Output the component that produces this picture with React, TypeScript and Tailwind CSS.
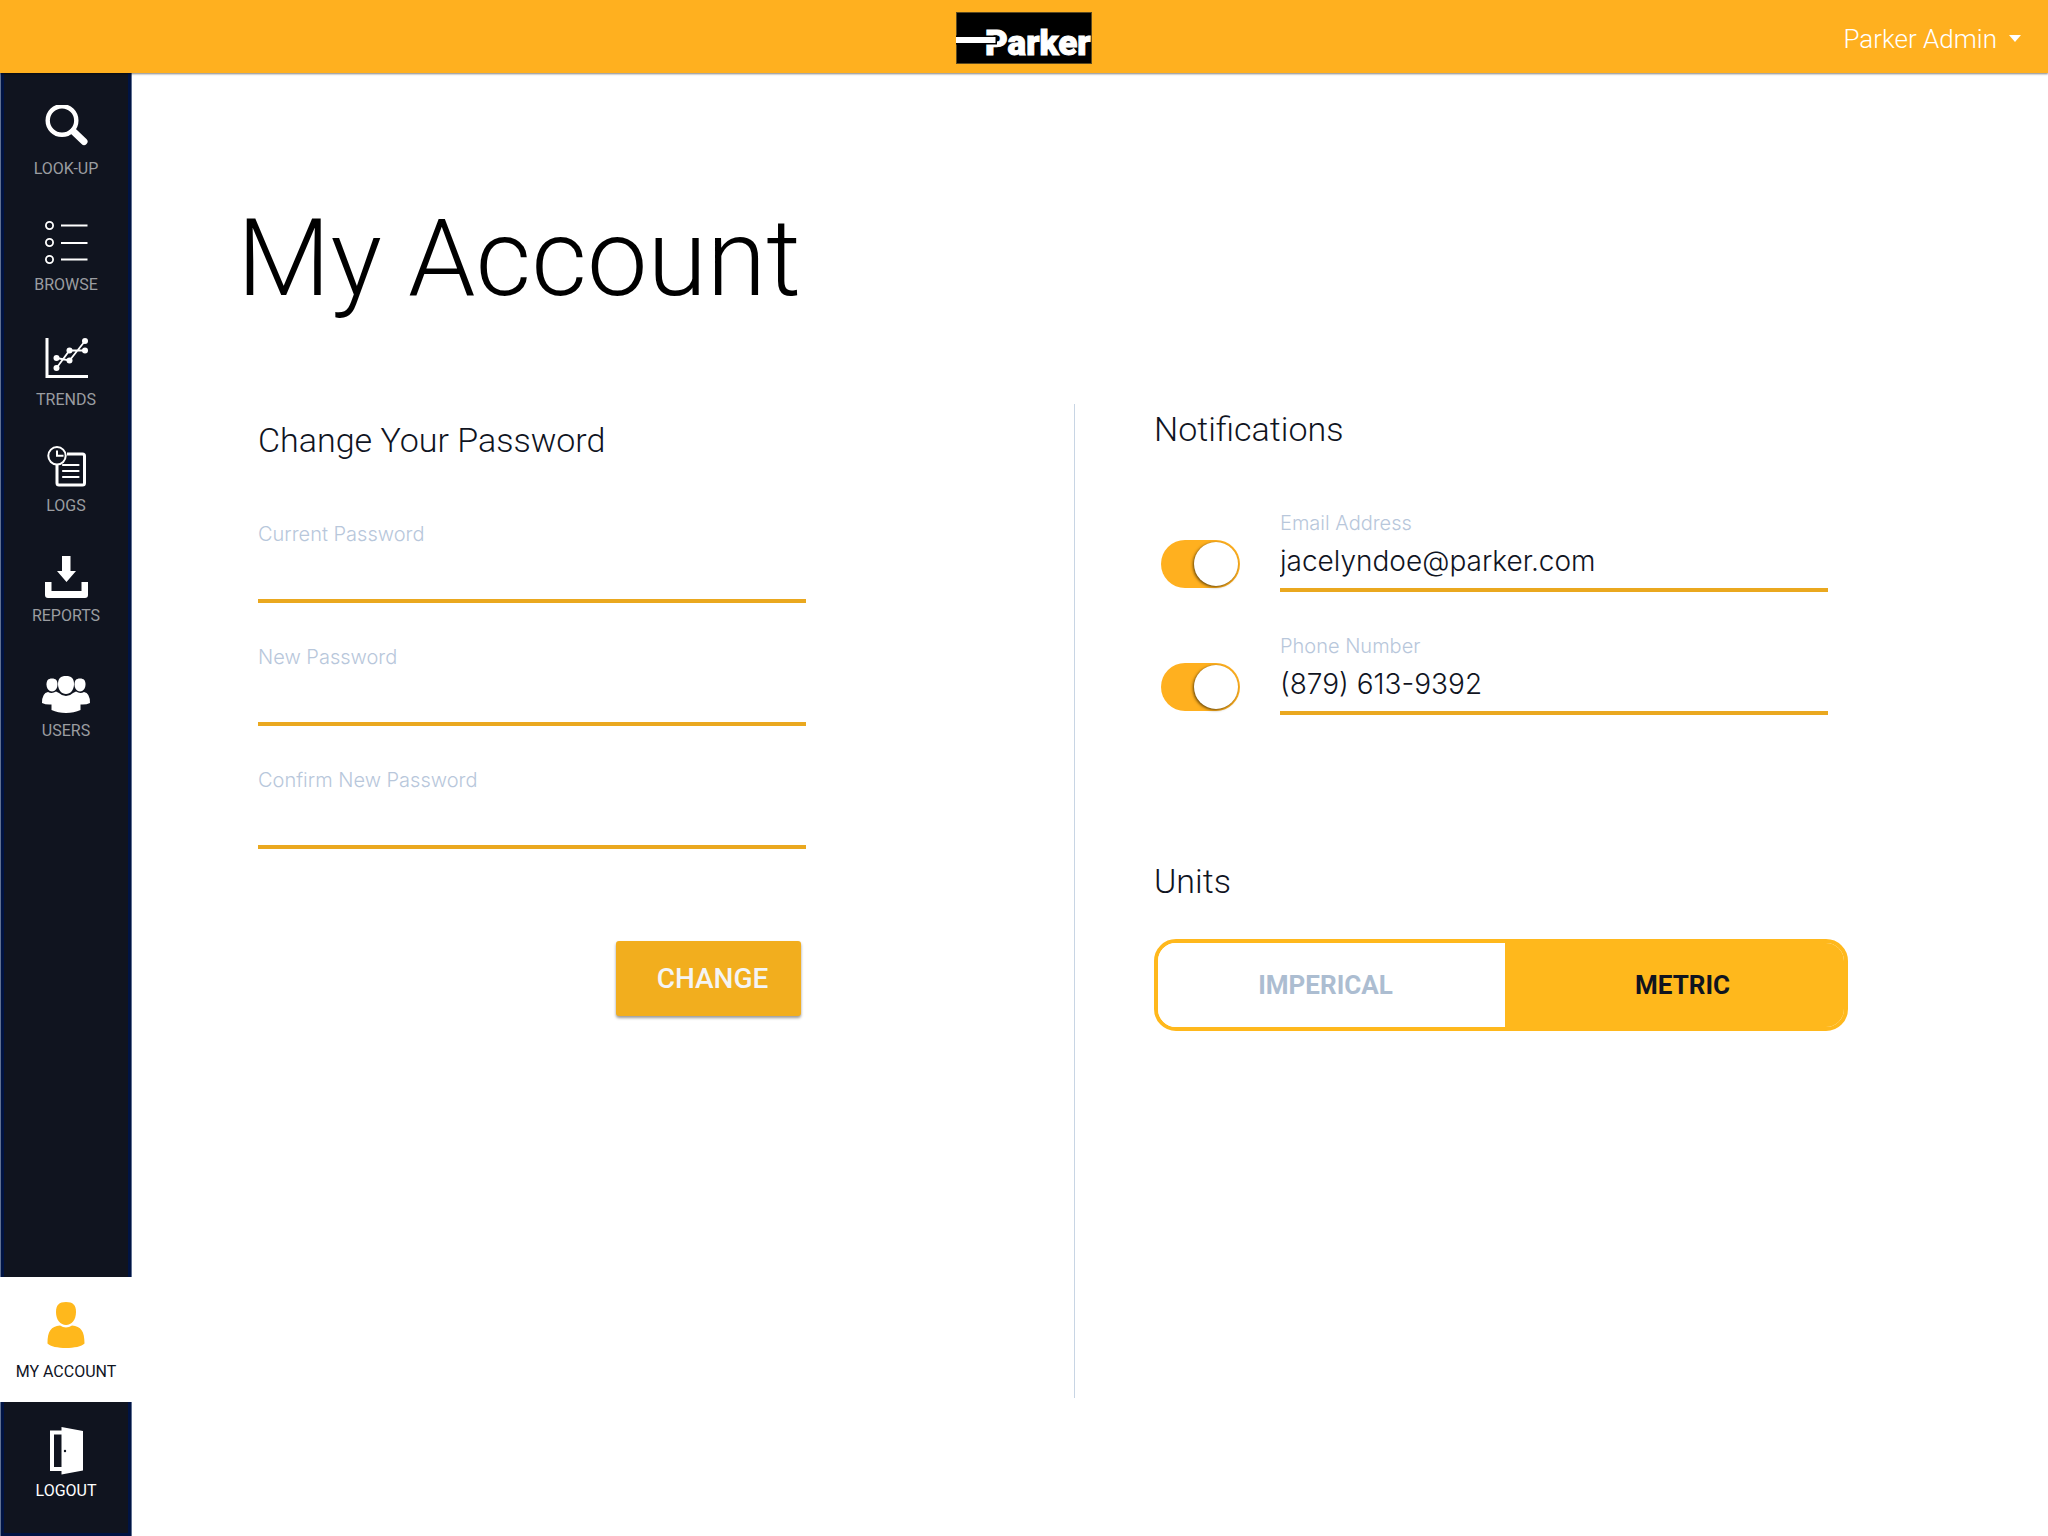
import React, { useState } from "react";

type IconProps = { className?: string };

const SearchIcon = ({ className }: IconProps) => (
  <svg className={className} width="44" height="42" viewBox="0 0 44 42" fill="none" stroke="#fff" aria-hidden="true">
    <circle cx="18" cy="15.500" r="14.300" strokeWidth="4.400" />
    <path d="M29.500 26.500L40 36.500" strokeWidth="7" strokeLinecap="round" />
  </svg>
);

const ListIcon = ({ className }: IconProps) => (
  <svg className={className} width="44" height="44" viewBox="0 0 44 44" fill="none" stroke="#fff" strokeWidth="1.800" aria-hidden="true">
    <circle cx="5.500" cy="4.500" r="3.600" />
    <circle cx="5.500" cy="21.500" r="3.600" />
    <circle cx="5.500" cy="38.500" r="3.600" />
    <path d="M17 4.500H43.500M17 22H43.500M17 38.500H43.500" strokeWidth="2" />
  </svg>
);

const TrendsIcon = ({ className }: IconProps) => (
  <svg className={className} width="44" height="42" viewBox="0 0 44 42" fill="none" stroke="#fff" aria-hidden="true">
    <path d="M3 0V38.500H44" strokeWidth="3" />
    <path d="M12.500 30L25.500 12.500H41M12.500 20L25.500 22.500L41 3" strokeWidth="1.800" />
    <g fill="#fff" stroke="none">
      <circle cx="12.500" cy="30" r="3" />
      <circle cx="12.500" cy="20" r="3" />
      <circle cx="25.500" cy="12.500" r="3" />
      <circle cx="25.500" cy="22.500" r="3" />
      <circle cx="41" cy="12.500" r="3" />
      <circle cx="41" cy="3" r="3" />
    </g>
  </svg>
);

const LogsIcon = ({ className }: IconProps) => (
  <svg className={className} width="40" height="42" viewBox="0 0 40 42" fill="none" stroke="#fff" aria-hidden="true">
    <path d="M21 8H36.500Q38.500 8 38.500 10V37Q38.500 39 36.500 39H13Q11 39 11 37V18.500" strokeWidth="3" />
    <circle cx="11" cy="9.800" r="8.700" strokeWidth="2" />
    <path d="M11 4.500V9.800H17.500" strokeWidth="2" />
    <path d="M17 19H32.500M17 25H32.500M17 31H32.500" strokeWidth="2.200" strokeLinecap="round" />
  </svg>
);

const ReportsIcon = ({ className }: IconProps) => (
  <svg className={className} width="43" height="42" viewBox="0 0 43 42" fill="#fff" aria-hidden="true">
    <path d="M17 0H25.500V15H31L21.500 26L12 15H17Z" />
    <path d="M0 26H6.500V35H36.500V26H43V39Q43 42 40 42H3Q0 42 0 39Z" />
  </svg>
);

const UsersIcon = ({ className }: IconProps) => (
  <svg className={className} width="48" height="37" viewBox="0 0 48 37" fill="#fff" aria-hidden="true">
    <path d="M10 2.500C14 2.500 15.500 4.500 15.500 8.500C15.500 12.500 13 15.500 10 15.500C7 15.500 4.500 12.500 4.500 8.500C4.500 4.500 6 2.500 10 2.500Z" />
    <path d="M38 2.500C42 2.500 43.500 4.500 43.500 8.500C43.500 12.500 41 15.500 38 15.500C35 15.500 32.500 12.500 32.500 8.500C32.500 4.500 34 2.500 38 2.500Z" />
    <path d="M24 0C29.500 0 32 2.500 32 8C32 14 28.500 18 24 18C19.500 18 16 14 16 8C16 2.500 18.500 0 24 0Z" />
    <path d="M6 16Q10 18 14 15.500L17 17Q20 20 24 20Q28 20 31 17L34 15.500Q38 18 42 16Q48 17 48 27Q44 29 38.500 28.500V34Q32 37 24 37Q16 37 9.500 34V28.500Q4 29 0 27Q0 17 6 16Z" />
  </svg>
);

const PersonIcon = ({ className }: IconProps) => (
  <svg className={className} width="38" height="46" viewBox="0 0 38 46" fill="#ffb81c" aria-hidden="true">
    <path d="M19 0C26 0 29 3 29 10C29 18 24.500 23 19 23C13.500 23 9 18 9 10C9 3 12 0 19 0Z" />
    <path d="M13 23.500Q19 27.500 25 23.500C34 24.500 37.500 29 37.500 41.500C32 47.500 6 47.500 .5 41.500C.5 29 4 24.500 13 23.500Z" />
  </svg>
);

const DoorIcon = ({ className }: IconProps) => (
  <svg className={className} width="34" height="48" viewBox="0 0 34 48" aria-hidden="true">
    <path fill="#fff" fillRule="evenodd" d="M1 3.500H13V44H1ZM5 7.500V40H13V7.500Z" />
    <path fill="#fff" d="M12.500 0L34 4V43.500L12.500 47.500Z" />
    <circle cx="16" cy="24" r="1.200" fill="#10141f" />
  </svg>
);

const ParkerLogo = () => (
  <svg width="136" height="52" viewBox="0 0 136 52" role="img" aria-label="Parker">
    <rect x=".5" y=".5" width="135" height="51" fill="#000" stroke="#5c4a20" />
    <text x="29" y="43" fill="#fff" stroke="#fff" strokeWidth="1" fontFamily="Roboto, sans-serif" fontWeight="900" fontSize="35">
      Parker
    </text>
    <path d="M0 23.500H41V32.500H0Z" fill="#000" />
    <path d="M0 25H39.500V31H0Z" fill="#fff" />
  </svg>
);

const navItems = [
  { label: "LOOK-UP", Icon: SearchIcon, box: "h-[106px] gap-3" },
  { label: "BROWSE", Icon: ListIcon, box: "h-[116px] gap-2.5" },
  { label: "TRENDS", Icon: TrendsIcon, box: "h-[115px] gap-2.5" },
  { label: "LOGS", Icon: LogsIcon, box: "h-[106px] gap-2" },
  { label: "REPORTS", Icon: ReportsIcon, box: "h-[110px] gap-2" },
  { label: "USERS", Icon: UsersIcon, box: "h-[115px] gap-2" },
];

const inputClass =
  "block w-full border-b-4 border-[#eaa81f] bg-transparent pb-0.5 font-['Inter',sans-serif] text-[28px] leading-8 font-light text-[#10141f] outline-none";

function Field(props: { id: string; label: string; type: string; value?: string }) {
  const [value, setValue] = useState(props.value ?? "");
  return (
    <div className="flex h-[81px] w-full max-w-[548px] flex-col">
      <label htmlFor={props.id} className="font-['Inter',sans-serif] text-[20px] leading-6 font-light text-[#b8c7db]">
        {props.label}
      </label>
      <input
        id={props.id}
        type={props.type}
        value={value}
        onChange={(e) => setValue(e.target.value)}
        className={`${inputClass} flex-1`}
      />
    </div>
  );
}

function Toggle({ label }: { label: string }) {
  return (
    <label className="relative mb-1 block h-12 w-[79px] shrink-0 cursor-pointer">
      <input type="checkbox" role="switch" defaultChecked aria-label={label} className="peer absolute inset-0 opacity-0" />
      <span className="absolute inset-0 rounded-full bg-gray-300 peer-checked:bg-[#ffb01f]" />
      <span className="absolute top-0.5 left-0.5 size-11 rounded-full bg-white shadow-[-1px_1px_3px_rgba(60,40,0,0.8)] peer-checked:left-[33px]" />
    </label>
  );
}

export default function App() {
  const [unit, setUnit] = useState("METRIC");
  const seg = (name: string) =>
    unit === name ? "bg-[#ffb81c] text-[#10141f]" : "bg-white text-[#acbdd1]";
  return (
    <div className="flex min-h-screen flex-col bg-white font-['Roboto',sans-serif] text-[#10141f]">
      <header className="relative z-10 grid h-[73px] grid-cols-[1fr_auto_1fr] items-center bg-[#ffb01f] shadow-[0_1px_2px_rgba(0,0,0,0.5)]">
        <span />
        <a href="#home" className="block pt-0.5">
          <ParkerLogo />
        </a>
        <button type="button" className="flex items-center gap-3 justify-self-end pt-1 pr-[27px] text-[26px] leading-8 font-light text-white">
          Parker Admin
          <svg width="12" height="7" viewBox="0 0 12 7" fill="#fff" aria-hidden="true">
            <path d="M0 0H12L6 7Z" />
          </svg>
        </button>
      </header>

      <div className="flex flex-1">
        <nav aria-label="Main" className="flex w-[132px] shrink-0 flex-col text-[16px] leading-5 font-normal">
          <div className="flex flex-1 flex-col border-x border-[#5f6f90] bg-[#10141f] text-[#9b9da1] shadow-[inset_3px_0_#001343,inset_-3px_0_#001343]">
            {navItems.map(({ label, Icon, box }) => (
              <a key={label} href={`#${label.toLowerCase()}`} className={`flex flex-col items-center justify-end ${box}`}>
                <Icon />
                {label}
              </a>
            ))}
          </div>
          <a href="#account" aria-current="page" className="flex h-[125px] flex-col items-center gap-3.5 bg-white pt-[25px]">
            <PersonIcon />
            MY ACCOUNT
          </a>
          <a
            href="#logout"
            className="flex h-[134px] flex-col items-center gap-1.5 border-x border-[#5f6f90] bg-[#10141f] pt-[25px] text-white shadow-[inset_3px_0_#001343,inset_-3px_-3px_#001343]"
          >
            <DoorIcon />
            LOGOUT
          </a>
        </nav>

        <main className="flex flex-1 flex-col pb-[138px]">
          <h1 className="mt-[125px] ml-[105px] text-[108px] leading-[120px] font-light text-black">My Account</h1>
          <div className="mt-[86px] grid flex-1 grid-cols-[942fr_974fr]">
            <form className="flex flex-col pr-8 pl-[126px]" onSubmit={(e) => e.preventDefault()}>
              <h2 className="mt-4 text-[34px] leading-10 font-light">Change Your Password</h2>
              <div className="mt-[62px] flex flex-col gap-[42px]">
                <Field id="current" label="Current Password" type="password" />
                <Field id="new" label="New Password" type="password" />
                <Field id="confirm" label="Confirm New Password" type="password" />
              </div>
              <div className="mt-[92px] flex max-w-[543px] justify-end">
                <button
                  type="submit"
                  className="h-[75px] w-[185px] rounded-[3px] bg-[#f2ae1e] pl-2 text-[28px] font-medium text-[#f4f4f4] shadow-[0_2px_3px_rgba(0,0,0,0.4)]"
                >
                  CHANGE
                </button>
              </div>
            </form>

            <div className="border-l border-[#c8d5e4] pr-8 pl-[79px]">
              <section aria-labelledby="notifications">
                <h2 id="notifications" className="mt-[5px] text-[34px] leading-10 font-light">
                  Notifications
                </h2>
                <div className="mt-[62px] flex flex-col gap-[42px] pl-[7px]">
                  <div className="flex items-end gap-10">
                    <Toggle label="Email notifications" />
                    <Field id="email" label="Email Address" type="email" value="jacelyndoe@parker.com" />
                  </div>
                  <div className="flex items-end gap-10">
                    <Toggle label="Phone notifications" />
                    <Field id="phone" label="Phone Number" type="tel" value="(879) 613-9392" />
                  </div>
                </div>
              </section>
              <section aria-labelledby="units">
                <h2 id="units" className="mt-[146px] text-[34px] leading-10 font-light">
                  Units
                </h2>
                <div className="mt-[38px] grid h-[92px] max-w-[694px] grid-cols-[347fr_339fr] overflow-hidden rounded-[22px] border-4 border-[#ffb81c] text-[26px] font-bold">
                  <button type="button" aria-pressed={unit === "IMPERICAL"} onClick={() => setUnit("IMPERICAL")} className={`pr-3 ${seg("IMPERICAL")}`}>
                    IMPERICAL
                  </button>
                  <button type="button" aria-pressed={unit === "METRIC"} onClick={() => setUnit("METRIC")} className={`pl-4 ${seg("METRIC")}`}>
                    METRIC
                  </button>
                </div>
              </section>
            </div>
          </div>
        </main>
      </div>
    </div>
  );
}
